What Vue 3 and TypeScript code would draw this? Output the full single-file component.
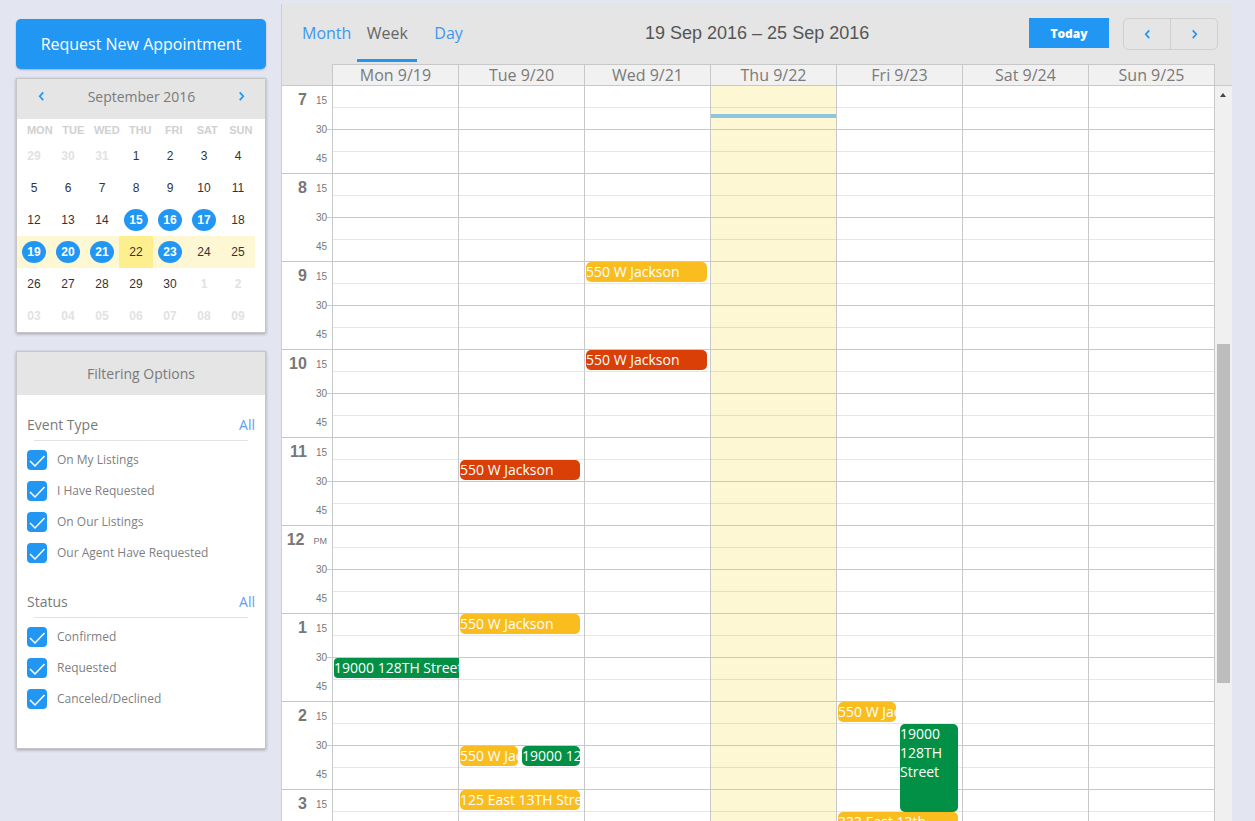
<script setup lang="ts">
interface CalDay {
  label: string
  muted?: boolean
  picked?: boolean
  today?: boolean
  week?: boolean
}

interface CalEvent {
  id: number
  title: string
  day: number
  top: number
  height: number
  left: number
  width: number
  color: 'yellow' | 'red' | 'green'
  square?: boolean
}

const weekdays = ['MON', 'TUE', 'WED', 'THU', 'FRI', 'SAT', 'SUN']

const calendarRows: CalDay[][] = [
  [{ label: '29', muted: true }, { label: '30', muted: true }, { label: '31', muted: true }, { label: '1' }, { label: '2' }, { label: '3' }, { label: '4' }],
  [{ label: '5' }, { label: '6' }, { label: '7' }, { label: '8' }, { label: '9' }, { label: '10' }, { label: '11' }],
  [{ label: '12' }, { label: '13' }, { label: '14' }, { label: '15', picked: true }, { label: '16', picked: true }, { label: '17', picked: true }, { label: '18' }],
  [
    { label: '19', picked: true, week: true },
    { label: '20', picked: true, week: true },
    { label: '21', picked: true, week: true },
    { label: '22', today: true, week: true },
    { label: '23', picked: true, week: true },
    { label: '24', week: true },
    { label: '25', week: true }
  ],
  [{ label: '26' }, { label: '27' }, { label: '28' }, { label: '29' }, { label: '30' }, { label: '1', muted: true }, { label: '2', muted: true }],
  [{ label: '03', muted: true }, { label: '04', muted: true }, { label: '05', muted: true }, { label: '06', muted: true }, { label: '07', muted: true }, { label: '08', muted: true }, { label: '09', muted: true }]
]

const filterGroups = [
  { title: 'Event Type', items: ['On My Listings', 'I Have Requested', 'On Our Listings', 'Our Agent Have Requested'] },
  { title: 'Status', items: ['Confirmed', 'Requested', 'Canceled/Declined'] }
]

const views = ['Month', 'Week', 'Day']
const days = ['Mon 9/19', 'Tue 9/20', 'Wed 9/21', 'Thu 9/22', 'Fri 9/23', 'Sat 9/24', 'Sun 9/25']
const hours = [
  { label: '7', first: '15' },
  { label: '8', first: '15' },
  { label: '9', first: '15' },
  { label: '10', first: '15' },
  { label: '11', first: '15' },
  { label: '12', first: 'PM' },
  { label: '1', first: '15' },
  { label: '2', first: '15' },
  { label: '3', first: '15' }
]

// top is measured from the 7am line, 88px per hour
const events: CalEvent[] = [
  { id: 1, title: '550 W Jackson', day: 2, top: 176, height: 20, left: 1, width: 121, color: 'yellow' },
  { id: 2, title: '550 W Jackson', day: 2, top: 264, height: 20, left: 1, width: 121, color: 'red' },
  { id: 3, title: '550 W Jackson', day: 1, top: 374, height: 20, left: 1, width: 120, color: 'red' },
  { id: 4, title: '550 W Jackson', day: 1, top: 528, height: 20, left: 1, width: 120, color: 'yellow' },
  { id: 5, title: '19000 128TH Street', day: 0, top: 572, height: 20, left: 1, width: 125, color: 'green', square: true },
  { id: 6, title: '550 W Jackson', day: 1, top: 660, height: 20, left: 1, width: 58, color: 'yellow' },
  { id: 7, title: '19000 128TH Street', day: 1, top: 660, height: 20, left: 63, width: 58, color: 'green' },
  { id: 8, title: '125 East 13TH Street', day: 1, top: 704, height: 20, left: 1, width: 120, color: 'yellow' },
  { id: 9, title: '550 W Jackson', day: 4, top: 616, height: 20, left: 1, width: 58, color: 'yellow' },
  { id: 10, title: '19000 128TH Street', day: 4, top: 638, height: 88, left: 63, width: 58, color: 'green' },
  { id: 11, title: '333 East 13th Street', day: 4, top: 726, height: 44, left: 1, width: 120, color: 'yellow' }
]

const eventsFor = (day: number) => events.filter((e) => e.day === day)
</script>

<template>
  <div class="page">
    <aside class="sidebar">
      <button class="request-btn">Request New Appointment</button>

      <section class="card mini-cal">
        <header class="card-head mini-cal__head">
          <svg class="chev" viewBox="0 0 8 12"><path d="M6 1.500 2 6l4 4.500" /></svg>
          <span>September 2016</span>
          <svg class="chev" viewBox="0 0 8 12"><path d="M2 1.500 6 6l-4 4.500" /></svg>
        </header>
        <div class="mini-cal__body">
          <div class="mini-cal__weekdays">
            <span v-for="w in weekdays" :key="w">{{ w }}</span>
          </div>
          <div v-for="(row, i) in calendarRows" :key="i" class="mini-cal__dates">
            <div
              v-for="d in row"
              :key="d.label"
              class="date"
              :class="{ 'is-muted': d.muted, 'is-week': d.week, 'is-today': d.today }"
            >
              <span :class="{ 'date__dot': d.picked }">{{ d.label }}</span>
            </div>
          </div>
        </div>
      </section>

      <section class="card filters">
        <header class="card-head filters__head">Filtering Options</header>
        <div class="filters__body">
          <div v-for="group in filterGroups" :key="group.title" class="filter-group">
            <div class="filter-group__title">
              <span>{{ group.title }}</span>
              <a>All</a>
            </div>
            <ul>
              <li v-for="item in group.items" :key="item">
                <span class="check">
                  <svg viewBox="0 0 20 20"><path d="M3 11 8 16 17.500 6" /></svg>
                </span>
                <span class="check-label">{{ item }}</span>
              </li>
            </ul>
          </div>
        </div>
      </section>
    </aside>

    <main class="scheduler">
      <div class="toolbar">
        <nav class="views">
          <a v-for="v in views" :key="v" class="views__item" :class="{ active: v === 'Week' }">{{ v }}</a>
        </nav>
        <h2 class="range">19 Sep 2016 – 25 Sep 2016</h2>
        <button class="today-btn">Today</button>
        <div class="pager">
          <button>
            <svg class="chev" viewBox="0 0 8 12"><path d="M6 1.500 2 6l4 4.500" /></svg>
          </button>
          <button>
            <svg class="chev" viewBox="0 0 8 12"><path d="M2 1.500 6 6l-4 4.500" /></svg>
          </button>
        </div>
      </div>

      <div class="day-heads">
        <div v-for="d in days" :key="d" class="day-heads__cell">{{ d }}</div>
      </div>

      <div class="grid-wrap">
        <div class="grid">
          <div class="times">
            <div v-for="h in hours" :key="h.label" class="hour">
              <div class="hour__first">
                <b>{{ h.label }}</b>
                <span :class="{ pm: h.first === 'PM' }">{{ h.first }}</span>
              </div>
              <span class="hour__mark hour__mark--half">30</span>
              <span class="hour__mark">45</span>
            </div>
          </div>
          <div v-for="(d, i) in days" :key="d" class="col" :class="{ 'col--today': i === 3 }">
            <div v-for="h in hours" :key="h.label" class="slot">
              <i /><i /><i /><i />
            </div>
            <div v-if="i === 3" class="now-line" />
            <div
              v-for="e in eventsFor(i)"
              :key="e.id"
              class="event"
              :class="['event--' + e.color, { 'event--square': e.square, 'event--single': e.height === 20 }]"
              :style="{ top: e.top + 'px', height: e.height + 'px', left: e.left + 'px', width: e.width + 'px' }"
            >
              {{ e.title }}
            </div>
          </div>
        </div>
        <div class="scrollbar">
          <span class="scrollbar__arrow" />
          <span class="scrollbar__thumb" />
        </div>
      </div>
    </main>
  </div>
</template>

<style>
html,
body {
  margin: 0;
  height: 100%;
  overflow: hidden;
  background: #e3e5f1;
}
</style>

<style scoped>
.page {
  display: flex;
  align-items: flex-start;
  height: 821px;
  overflow: hidden;
  font-family: "Open Sans", sans-serif;
  color: #7a7a7a;
}

button {
  font-family: inherit;
  border: none;
  padding: 0;
}

.chev {
  width: 7px;
  height: 10.500px;
  fill: none;
  stroke: #2196f3;
  stroke-width: 2;
}

.sidebar {
  width: 250px;
  margin: 19px 15px 0 16px;
  flex-shrink: 0;
}

.request-btn {
  display: block;
  width: 100%;
  height: 50px;
  background: #2196f3;
  color: #fff;
  font-size: 16px;
  border-radius: 5px;
  box-shadow: 0 1px 2px rgba(0, 0, 0, 0.25);
}

.card {
  background: #fff;
  border: 1px solid #c6c6c6;
  box-shadow: 0 1px 3px rgba(0, 0, 0, 0.3);
}

.card-head {
  background: #e5e5e5;
  font-size: 14px;
  color: #7a7a7a;
}

.mini-cal {
  margin-top: 9px;
  height: 253px;
}

.mini-cal__head {
  height: 40px;
  box-sizing: border-box;
  padding: 0 20px 6px 21px;
  display: flex;
  align-items: center;
  justify-content: space-between;
}

.mini-cal__weekdays {
  height: 21px;
  padding-left: 6px;
  display: grid;
  grid-template-columns: repeat(7, 33.500px);
  align-items: center;
  text-align: center;
  font-family: "Liberation Sans", sans-serif;
  font-size: 11px;
  font-weight: 700;
  color: #d0d0d0;
}

.mini-cal__dates {
  display: grid;
  grid-template-columns: repeat(7, 34px);
  height: 32px;
}

.date {
  display: flex;
  align-items: center;
  justify-content: center;
  font-family: "Liberation Sans", sans-serif;
  font-size: 12px;
  color: #333;
}

.date.is-muted {
  color: #e2e2e2;
  font-weight: 700;
}

.date.is-week {
  background: #fdf7d3;
}

.date.is-today {
  background: #fdee8e;
}

.date__dot {
  width: 24px;
  height: 22px;
  border-radius: 50%;
  background: #2196f3;
  color: #fff;
  font-weight: 700;
  display: flex;
  align-items: center;
  justify-content: center;
}

.filters {
  margin-top: 18px;
  height: 396px;
}

.filters__head {
  height: 43px;
  line-height: 43px;
  text-align: center;
}

.filters__body {
  padding: 18px 10px 0;
}

.filter-group {
  margin-bottom: 27px;
}

.filter-group__title {
  display: flex;
  justify-content: space-between;
  font-size: 14px;
  line-height: 24px;
  color: #7a7a7a;
  position: relative;
  padding-bottom: 4px;
  margin-bottom: 9px;
}

.filter-group__title::after {
  content: "";
  position: absolute;
  left: 7px;
  right: 7px;
  bottom: 0;
  border-bottom: 1px solid #e2e2e2;
}

.filter-group__title a {
  color: #5c9df5;
}

ul {
  list-style: none;
  margin: 0;
  padding: 0;
}

li {
  display: flex;
  align-items: center;
  height: 20px;
  margin-bottom: 11px;
  font-size: 12px;
  color: #7f7f7f;
}

.check-label {
  margin-top: -2px;
}

.check {
  width: 20px;
  height: 20px;
  border-radius: 4px;
  background: #2196f3;
  margin-right: 10px;
  flex-shrink: 0;
}

.check svg {
  display: block;
  width: 20px;
  height: 20px;
  fill: none;
  stroke: #fff;
  stroke-width: 1.500;
}

.scheduler {
  width: 951px;
  margin-top: 4px;
  flex-shrink: 0;
  background: #e5e5e5;
  border-left: 1px solid #cfcfcf;
  box-sizing: border-box;
  height: 817px;
  display: flex;
  flex-direction: column;
}

.toolbar {
  height: 60px;
  flex-shrink: 0;
  display: flex;
  align-items: flex-start;
  position: relative;
  box-sizing: border-box;
  padding: 14px 14px 0 20px;
}

.views {
  display: flex;
  font-size: 16px;
}

.views__item {
  color: #3d97f0;
  height: 44px;
  line-height: 30px;
  margin-right: 6px;
  text-align: center;
}

.views__item.active {
  width: 60px;
  color: #666;
  border-bottom: 3px solid #2196f3;
  box-sizing: border-box;
  margin-right: 17px;
}

.range {
  margin: 0;
  position: absolute;
  left: 363px;
  top: 18px;
  font-family: "Liberation Sans", sans-serif;
  font-size: 18px;
  font-weight: 400;
  line-height: 22px;
  color: #555;
}

.today-btn {
  margin-left: auto;
  width: 80px;
  height: 30px;
  background: #2196f3;
  color: #fff;
  font-size: 12px;
  font-weight: 800;
}

.pager {
  display: flex;
  margin-left: 14px;
  width: 95px;
  height: 32px;
  border: 1px solid #cfcfcf;
  border-radius: 5px;
  box-sizing: border-box;
}

.pager button {
  flex: 1;
  background: transparent;
  display: flex;
  align-items: center;
  justify-content: center;
}

.pager button + button {
  border-left: 1px solid #cfcfcf;
}

.day-heads {
  display: grid;
  grid-template-columns: repeat(7, 126px);
  margin-left: 50px;
  height: 21px;
  flex-shrink: 0;
  box-sizing: border-box;
  border-left: 1px solid #c8c8c8;
  width: 883px;
}

.day-heads__cell {
  background: #f1f1f1;
  border-top: 1px solid #c8c8c8;
  border-right: 1px solid #c8c8c8;
  box-sizing: border-box;
  text-align: center;
  font-size: 16px;
  line-height: 20px;
  color: #7a7a7a;
}

.grid-wrap {
  flex: 1;
  min-height: 0;
  display: flex;
  overflow: hidden;
  border-top: 1px solid #c8c8c8;
}

.grid {
  display: grid;
  grid-template-columns: 50px repeat(6, 126px) 127px;
  width: 933px;
  flex-shrink: 0;
  background: #fff;
  height: 792px;
  overflow: hidden;
}

.times {
  background: #fff;
}

.hour {
  height: 88px;
  box-sizing: border-box;
  border-bottom: 1px solid #c8c8c8;
}

.hour__first {
  height: 29px;
  display: flex;
  align-items: center;
  justify-content: flex-end;
  padding-right: 5px;
  font-family: "Liberation Sans", sans-serif;
  color: #777;
}

.hour__first b {
  font-size: 16px;
  margin-right: 9px;
  margin-top: -2px;
}

.hour__first span {
  font-size: 10px;
  min-width: 11px;
  text-align: right;
}

.hour__first span.pm {
  font-size: 9px;
}

.hour__mark {
  display: block;
  height: 29px;
  line-height: 29px;
  text-align: right;
  padding-right: 5px;
  font-family: "Liberation Sans", sans-serif;
  font-size: 10px;
  color: #777;
  position: relative;
}

/* short tick between the 30 label and the grid */
.hour__mark--half::after {
  content: "";
  position: absolute;
  right: 0;
  top: 14px;
  width: 5px;
  border-top: 1px solid #c8c8c8;
}

.col {
  position: relative;
  box-sizing: border-box;
  border-left: 1px solid #c8c8c8;
}

.col:last-child {
  border-right: 1px solid #c8c8c8;
}

.col--today {
  background: #fdf7d3;
}

.slot {
  height: 88px;
}

.slot i {
  display: block;
  height: 22px;
  box-sizing: border-box;
  border-bottom: 1px solid #e6e6e6;
}

.col--today .slot i {
  border-bottom-color: #ece0a8;
}

.slot i:nth-child(2),
.slot i:nth-child(4),
.col--today .slot i:nth-child(2),
.col--today .slot i:nth-child(4) {
  border-bottom-color: #c8c8c8;
}

.now-line {
  position: absolute;
  left: 0;
  right: 0;
  top: 28px;
  height: 4px;
  background: #8fc5dc;
}

.event {
  position: absolute;
  box-sizing: border-box;
  overflow: hidden;
  border-radius: 5px;
  color: #fff;
  font-size: 14px;
  line-height: 19px;
  z-index: 1;
}

.event--single {
  white-space: nowrap;
}

.event--square {
  border-radius: 4px 0 0 4px;
}

.event--yellow {
  background: #fabd1f;
}

.event--red {
  background: #d93f06;
}

.event--green {
  background: #029046;
}

.scrollbar {
  flex: 1;
  background: #f0f0f0;
  position: relative;
}

.scrollbar__arrow {
  position: absolute;
  left: 5px;
  top: 7px;
  border: 3.500px solid transparent;
  border-top: none;
  border-bottom: 4px solid #444;
}

.scrollbar__thumb {
  position: absolute;
  left: 2px;
  right: 2px;
  top: 258px;
  height: 339px;
  background: #bdbdbd;
}
</style>
